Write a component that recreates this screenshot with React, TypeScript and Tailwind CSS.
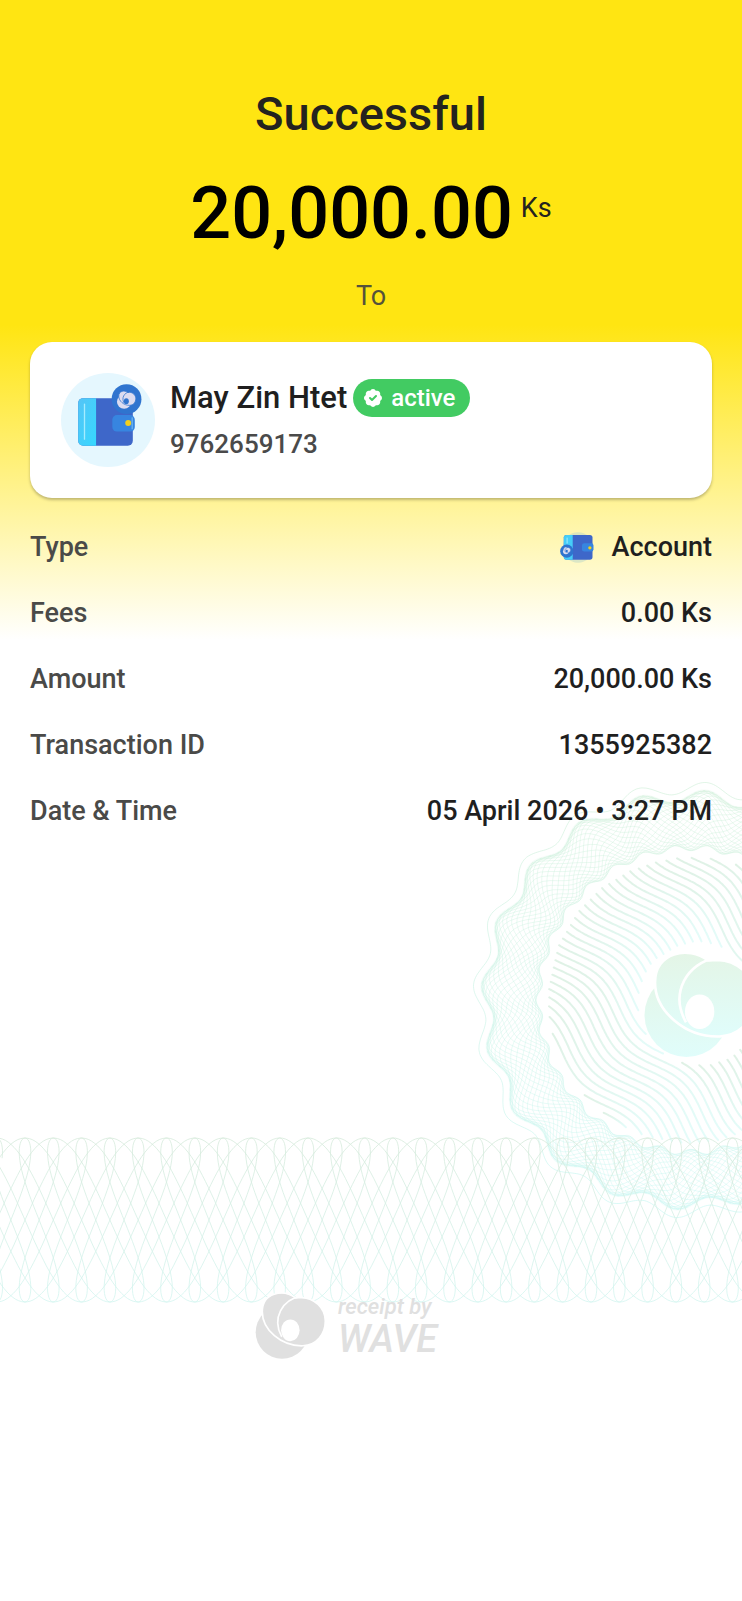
import type { ReactNode } from 'react'
import { BadgeCheck } from 'lucide-react'

const CX = 691
const CY = 1000

const rad = (deg: number) => (deg * Math.PI) / 180
const outerWave = (a: number) => 6 * Math.cos(20 * (a + rad(86)))
const innerWave = (a: number) => 3 * Math.cos(30 * (a + rad(84)))

function toPath(points: number[][]) {
  return 'M' + points.map(([x, y]) => `${x.toFixed(1)} ${y.toFixed(1)}`).join('L')
}

function ring(radius: (a: number) => number) {
  const points: number[][] = []
  for (let i = 0; i <= 720; i++) {
    const a = rad(i / 2)
    points.push([CX + radius(a) * Math.cos(a), CY + radius(a) * Math.sin(a)])
  }
  return toPath(points)
}

function meshLines() {
  const out: string[] = []
  const count = 150
  for (const dir of [-1, 1]) {
    for (let i = 0; i < count; i++) {
      const points: number[][] = []
      for (let s = 0; s <= 20; s++) {
        const t = s / 20
        const a = (i / count) * Math.PI * 2 + dir * t * 0.55
        const inner = 152 + innerWave(a)
        const outer = 204 + outerWave(a)
        const r = inner + ((outer - inner) * (1 - Math.cos(Math.PI * t))) / 2
        points.push([CX + r * Math.cos(a), CY + r * Math.sin(a)])
      }
      out.push(toPath(points))
    }
  }
  return out.join('')
}

// wavy diagonal stripes, broken where the logo sits
function stripes() {
  const out: string[] = []
  for (let v0 = -152; v0 <= 152; v0 += 8) {
    let run: number[][] = []
    for (let u = -150; u <= 152; u += 2) {
      const v = v0 + 8 * Math.sin((2 * Math.PI * u) / 135 - v0 * 0.006 + 4.9)
      const x = (u + v) * Math.SQRT1_2
      const y = (u - v) * Math.SQRT1_2
      const inside = Math.hypot(x, y) < 143 && Math.hypot(x - 8, y - 4) > 61 && u < 150
      if (inside) {
        run.push([CX + x, CY + y])
      } else {
        if (run.length > 3) out.push(toPath(run))
        run = []
      }
    }
  }
  return out
}

const BAND_PITCH = 28.3

// wide arches plus a narrow looping wave, both peaking on the same pitch
function bandLines() {
  const out: string[] = []
  const families = [
    { periods: 8, loop: 0 },
    { periods: 2, loop: 12 },
  ]
  for (const { periods, loop } of families) {
    const step = (BAND_PITCH * periods) / (2 * Math.PI)
    for (let k = 0; k < periods; k++) {
      const points: number[][] = []
      for (let t = -7; step * t < 1700; t += 0.08) {
        const x = 25 + k * BAND_PITCH + step * t - loop * Math.sin(2 * t)
        points.push([x, 83 - 82 * Math.cos(t)])
      }
      out.push(toPath(points))
    }
  }
  return out.join('')
}

const MESH = meshLines()
const STRIPES = stripes()
const BAND = bandLines()

function WaveMark({ fill, gap, gapWidth = 5 }: { fill: string; gap: string; gapWidth?: number }) {
  return (
    <g>
      <circle cx="121" cy="158" r="80" fill={fill} />
      <path
        d="M162 54C124 26 61 38 61 96C61 150 118 201 184 199C226 197 252 163 252 124C252 84 218 54 180 53C173 53 168 54 162 54Z"
        fill={fill}
        stroke={gap}
        strokeWidth={gapWidth}
      />
      <path d="M176 50C124 58 88 115 120 172" fill="none" stroke={gap} strokeWidth={gapWidth} />
      <ellipse cx="146" cy="152" rx="28" ry="33" fill={gap} />
    </g>
  )
}

function WalletIcon() {
  return (
    <svg className="size-[94px] shrink-0" viewBox="16 14 284 284" aria-hidden="true">
      <defs>
        <linearGradient id="wallet-edge" x1="0" y1="0" x2="1" y2="1">
          <stop offset="0" stopColor="#55c4f6" />
          <stop offset="1" stopColor="#35d8ff" />
        </linearGradient>
      </defs>
      <circle cx="158" cy="156" r="142" fill="#e5f7fe" />
      <rect x="68" y="90" width="165" height="144" rx="15" fill="#3e67c9" />
      <path d="M83 90H122V234H83A15 15 0 0 1 68 219V105A15 15 0 0 1 83 90Z" fill="url(#wallet-edge)" />
      <path d="M87 108V214" stroke="#a5ecff" strokeWidth="4" strokeLinecap="round" />
      <circle cx="214" cy="93" r="45" fill="#2f74cf" />
      <rect x="171" y="141" width="68" height="50" rx="14" fill="#3785e0" />
      <path d="M231 148V184" stroke="#7cc4f5" strokeWidth="3" />
      <circle cx="219" cy="165" r="9" fill="#f2cf1c" />
      <g transform="translate(174 58) scale(.27)">
        <WaveMark fill="#dcdcf0" gap="#2f74cf" gapWidth={9} />
      </g>
    </svg>
  )
}

function SmallWalletIcon() {
  return (
    <svg className="h-[31px] w-[34px]" viewBox="22 21 102 94" aria-hidden="true">
      <circle cx="76" cy="68" r="46" fill="#b9d6c8" opacity="0.5" />
      <rect x="33" y="30" width="87" height="75" rx="8" fill="#3e67c9" />
      <path d="M41 30H60V105H41A8 8 0 0 1 33 97V38A8 8 0 0 1 41 30Z" fill="#45cdf8" />
      <path d="M43 38V56" stroke="#a5ecff" strokeWidth="3" />
      <circle cx="42" cy="79" r="20" fill="#2f74cf" />
      <g transform="translate(26 62) scale(.11)">
        <WaveMark fill="#dcdcf0" gap="#2f74cf" gapWidth={12} />
      </g>
      <rect x="88" y="55" width="35" height="25" rx="7" fill="#3785e0" />
      <circle cx="112" cy="69" r="5" fill="#f2cf1c" />
    </svg>
  )
}

function Rosette() {
  return (
    <svg
      className="absolute -top-[357px] right-0 -z-10 h-[440px] w-[270px]"
      viewBox="472 780 270 440"
      fill="none"
      aria-hidden="true"
    >
      <defs>
        <linearGradient id="rosette" gradientUnits="userSpaceOnUse" x1="0" y1="780" x2="0" y2="1220">
          <stop offset="0" stopColor="#cdeed6" />
          <stop offset="1" stopColor="#c2f6f2" />
        </linearGradient>
        <linearGradient id="stripe" x1="0" y1="0" x2="1" y2="1">
          <stop offset="0" stopColor="#dff1e5" />
          <stop offset="1" stopColor="#e4fcfa" />
        </linearGradient>
        <linearGradient id="mark" x1="0" y1="0" x2="0" y2="1">
          <stop offset="0" stopColor="#e4f5e6" />
          <stop offset="1" stopColor="#e0fdfb" />
        </linearGradient>
      </defs>
      <path d={ring(a => 212 + outerWave(a))} stroke="url(#rosette)" strokeWidth="1" opacity="0.6" />
      <path d={ring(a => 203 + outerWave(a))} stroke="url(#rosette)" strokeWidth="4" opacity="0.2" />
      <path d={MESH} stroke="url(#rosette)" strokeWidth="0.5" opacity="0.8" />
      {STRIPES.map(d => (
        <path key={d} d={d} stroke="url(#stripe)" strokeWidth="2" strokeLinecap="round" />
      ))}
      <g transform="translate(623 932) scale(.525)">
        <WaveMark fill="url(#mark)" gap="#ffffff" />
      </g>
    </svg>
  )
}

function DetailRow({ label, children }: { label: string; children: ReactNode }) {
  return (
    <div className="flex items-center justify-between leading-[36px]">
      <dt className="text-[#4a4a48]">{label}</dt>
      <dd className="flex items-center gap-[18px] text-[#1f1f1f]">{children}</dd>
    </div>
  )
}

export default function App() {
  return (
    <main className="isolate min-h-screen overflow-hidden bg-white bg-[linear-gradient(to_bottom,#ffe512_0,#ffe512_325px,#ffffff_640px)] font-['Roboto',sans-serif] text-[27px] font-medium">
      <header className="flex flex-col items-center pt-[86px]">
        <h1 className="text-[47px] leading-[56px] text-[#24231f]">Successful</h1>
        <p className="mt-8 flex items-start gap-2 text-black">
          <span className="text-[72px] leading-[80px]">20,000.00</span>
          <span className="mt-4 leading-[36px] font-normal text-[#24231f]">Ks</span>
        </p>
        <p className="mt-6 leading-[36px] font-normal text-[#55523a]">To</p>
      </header>

      <section className="mx-[30px] mt-[28px] flex items-center gap-[15px] rounded-[22px] bg-white px-[31px] py-[31px] shadow-[0_2px_3px_rgba(0,0,0,0.25)]">
        <WalletIcon />
        <div>
          <div className="flex items-center gap-[6px]">
            <h2 className="text-[31px] leading-[40px] text-[#1f1f1f]">May Zin Htet</h2>
            <span className="flex h-[38px] items-center gap-[6px] rounded-full bg-[#42cb62] pr-[15px] pl-2 text-[24px] text-white">
              <BadgeCheck className="size-[24px] fill-white stroke-[#42cb62]" strokeWidth={2} aria-hidden="true" />
              active
            </span>
          </div>
          <p className="mt-2 text-[26px] leading-[36px] text-[#4a4a4a]">9762659173</p>
        </div>
      </section>

      <dl className="mx-[30px] mt-[31px] flex flex-col gap-[30px]">
        <DetailRow label="Type">
          <SmallWalletIcon />
          Account
        </DetailRow>
        <DetailRow label="Fees">0.00 Ks</DetailRow>
        <DetailRow label="Amount">20,000.00 Ks</DetailRow>
        <DetailRow label="Transaction ID">1355925382</DetailRow>
        <DetailRow label="Date & Time">05 April 2026 • 3:27 PM</DetailRow>
      </dl>

      <div className="relative mt-[308px]">
        <Rosette />
        <svg
          className="h-[166px] w-full"
          viewBox="0 0 742 166"
          preserveAspectRatio="xMinYMin slice"
          fill="none"
          aria-hidden="true"
        >
          <defs>
            <linearGradient id="band" gradientUnits="userSpaceOnUse" x1="0" y1="0" x2="0" y2="166">
              <stop offset="0" stopColor="#d6eadb" />
              <stop offset="1" stopColor="#d3f5f0" />
            </linearGradient>
          </defs>
          <path d={BAND} stroke="url(#band)" strokeWidth="1" opacity="0.8" />
        </svg>
      </div>

      <footer className="relative -mt-[11px] flex items-center justify-center gap-3 pr-[50px] text-[#e0e0e0] italic">
        <svg className="h-[67px] w-[71px]" viewBox="40 36 213 203" aria-hidden="true">
          <WaveMark fill="#e0e0e0" gap="#ffffff" />
        </svg>
        <p className="flex flex-col">
          <span className="text-[22px] leading-[26px]">receipt by</span>
          <span className="text-[38px] leading-[38px]">WAVE</span>
        </p>
      </footer>
    </main>
  )
}
